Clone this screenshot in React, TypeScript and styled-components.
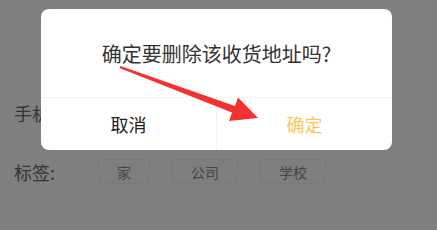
import React from "react";
import styled, { createGlobalStyle } from "styled-components";

const GlobalStyle = createGlobalStyle`
  html, body {
    margin: 0;
    padding: 0;
    background: #ffffff;
    font-family: "Noto Sans CJK SC", "Noto Sans", sans-serif;
  }
  #root { width: 437px; height: 230px; }
`;

const Page = styled.div`
  position: relative;
  width: 437px;
  height: 230px;
  overflow: hidden;
  background: #ffffff;
`;

const Form = styled.div`
  display: flex;
  flex-direction: column;
  padding: 83px 0 0 14px;
`;

const Row = styled.div`
  display: flex;
  align-items: center;
  height: 59px;
`;

const Label = styled.div`
  width: 84px;
  flex: none;
  font-size: 18px;
  color: #6a6a6a;
  white-space: nowrap;
`;

const Tags = styled.div`
  display: flex;
  gap: 22px;
`;

const Tag = styled.div`
  height: 23px;
  padding: 0 18px;
  display: flex;
  align-items: center;
  justify-content: center;
  border: 1px solid #f2f2f2;
  background: #fcfcfc;
  font-size: 14px;
  color: #8a8a8a;
  border-radius: 2px;
`;

const Mask = styled.div`
  position: absolute;
  inset: 0;
  background: rgba(0, 0, 0, 0.5);
`;

const Dialog = styled.div`
  position: absolute;
  left: 41px;
  top: 9px;
  width: 351px;
  height: 141px;
  background: #ffffff;
  border-radius: 8px;
  display: flex;
  flex-direction: column;
  overflow: hidden;
`;

const Title = styled.div`
  height: 89px;
  display: flex;
  align-items: center;
  justify-content: center;
  font-size: 20px;
  color: #333333;
  border-bottom: 1px solid #f2f2f2;
  box-sizing: border-box;
`;

const Actions = styled.div`
  flex: 1;
  display: flex;
`;

const ActionButton = styled.div<{ $primary?: boolean }>`
  flex: 1;
  display: flex;
  align-items: center;
  justify-content: center;
  font-size: 18px;
  color: ${(p) => (p.$primary ? "#fbc55b" : "#222222")};
  & + & {
    border-left: 1px solid #f2f2f2;
  }
`;

const ArrowLayer = styled.svg`
  position: absolute;
  left: 0;
  top: 0;
  width: 437px;
  height: 230px;
  pointer-events: none;
`;

export default function App() {
  return (
    <Page>
      <GlobalStyle />
      <Form>
        <Row>
          <Label>手机号码</Label>
        </Row>
        <Row>
          <Label>标签:</Label>
          <Tags>
            <Tag>家</Tag>
            <Tag>公司</Tag>
            <Tag>学校</Tag>
          </Tags>
        </Row>
      </Form>
      <Mask />
      <Dialog>
        <Title>确定要删除该收货地址吗?</Title>
        <Actions>
          <ActionButton>取消</ActionButton>
          <ActionButton $primary>确定</ActionButton>
        </Actions>
      </Dialog>
      <ArrowLayer viewBox="0 0 437 230">
        <polygon
          fill="#f43131"
          points="120.5,66 235,106 238,97.5 258,118 229,121 232,112.6 119.5,68"
        />
      </ArrowLayer>
    </Page>
  );
}
